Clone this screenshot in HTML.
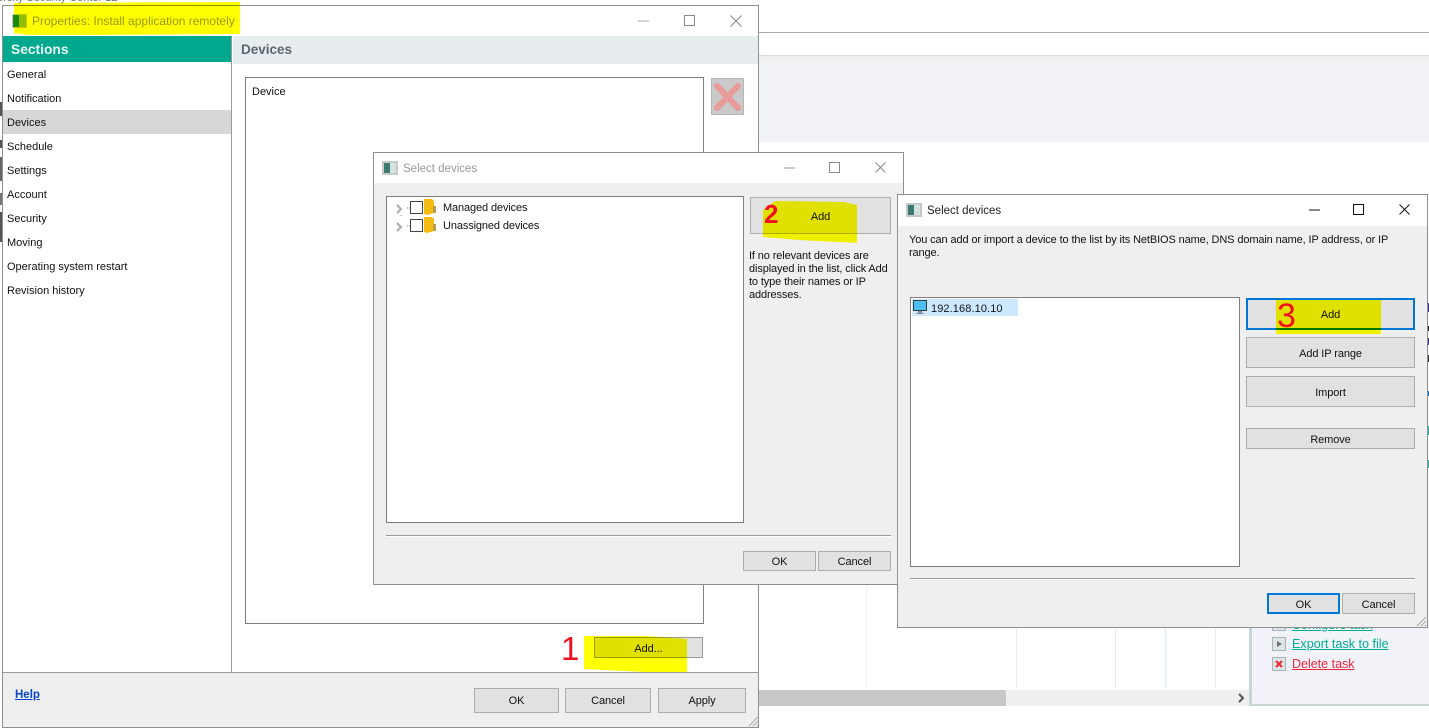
<!DOCTYPE html>
<html><head><meta charset="utf-8"><style>
*{box-sizing:border-box}
html,body{margin:0;padding:0;width:1429px;height:728px;overflow:hidden;background:#fff}
body{position:relative;font:11px/14px "Liberation Sans",sans-serif;color:#111}
div,svg,span.t{position:absolute}
.t{white-space:nowrap;line-height:14px}
.b{background:#e1e1e1;border:1px solid #adadad;text-align:center;color:#111;display:flex;align-items:center;justify-content:center;letter-spacing:-.1px}
.p{padding-top:2px}
.n{letter-spacing:-.12px}
.win{overflow:hidden;border:1px solid #8f8f8f;background:#efefef}
.hl{mix-blend-mode:multiply}
.l{background:#fff;border:1px solid #7d7d7d}
</style></head><body>
<!-- background app -->
<div style="left:0;top:-10px;width:200px;height:15px;overflow:hidden;left:0"><span class="t" style="left:-28px;top:1px;color:#777;font-size:11px">Kaspersky Security Center 12</span></div>
<div style="left:758px;top:32px;width:671px;height:1px;background:#a9a9a9"></div>
<div style="left:758px;top:55px;width:671px;height:1px;background:#ddd"></div>
<div style="left:758px;top:56px;width:671px;height:6px;background:#efefef"></div>
<div style="left:758px;top:62px;width:671px;height:80px;background:#f1f3f8"></div>
<div style="left:866px;top:585px;width:1px;height:104px;background:#edf2f8"></div>
<div style="left:1016px;top:628px;width:1px;height:61px;background:#e4edf6"></div>
<div style="left:1115px;top:628px;width:1px;height:61px;background:#e4edf6"></div>
<div style="left:1165px;top:628px;width:1px;height:61px;background:#e4edf6"></div>
<div style="left:1215px;top:628px;width:1px;height:61px;background:#e4edf6"></div>
<div style="left:758px;top:690px;width:491px;height:16px;background:#efefef"></div>
<div style="left:758px;top:690px;width:248px;height:16px;background:#c8c8c8"></div>
<svg style="left:1237px;top:692px" width="10" height="12"><path d="M2 2l4 4-4 4" fill="none" stroke="#555" stroke-width="2"/></svg>
<div style="left:1249px;top:620px;width:180px;height:86px;background:#f1f3f8;border-left:3px solid #c9d6d6;border-bottom:2px solid #c9d6d6"></div>
<span class="t" style="left:1292px;top:618px;font-size:12.500px;color:#00ad94;text-decoration:underline">Configure task</span>
<div style="left:1272px;top:618px;width:14px;height:13px;background:#dfe4e8;border:1px solid #a9b4b8"></div>
<div style="left:1272px;top:637px;width:14px;height:14px;background:#dfe4e8;border:1px solid #a9b4b8"></div>
<svg style="left:1272px;top:637px" width="14" height="14"><path d="M5 4l5 3-5 3z" fill="#6b7378"/></svg>
<span class="t" style="left:1292px;top:637px;font-size:12.600px;color:#00ad94;text-decoration:underline">Export task to file</span>
<div style="left:1272px;top:657px;width:14px;height:14px;background:#dfe4e8;border:1px solid #a9b4b8"></div>
<svg style="left:1272px;top:657px" width="14" height="14"><path d="M4 4l6 6M10 4l-6 6" stroke="#e8303c" stroke-width="2.2"/></svg>
<span class="t" style="left:1292px;top:657px;font-size:12.500px;color:#f0263c;text-decoration:underline">Delete task</span>
<!-- right edge bits -->
<div style="left:1428px;top:303px;width:1px;height:9px;background:#3b2f8f"></div>
<div style="left:1428px;top:326px;width:1px;height:5px;background:#222"></div>
<div style="left:1428px;top:338px;width:1px;height:7px;background:#3b2f8f"></div>
<div style="left:1428px;top:355px;width:1px;height:7px;background:#333"></div>
<div style="left:1428px;top:391px;width:1px;height:5px;background:#0078d7"></div>
<div style="left:1428px;top:426px;width:1px;height:9px;background:#1cb8a0"></div>
<div style="left:1428px;top:460px;width:1px;height:8px;background:#1cb8a0"></div>
<!-- left edge bits -->
<div style="left:0;top:102px;width:2px;height:14px;background:#555"></div>
<div style="left:0;top:140px;width:2px;height:8px;background:#555"></div>
<div style="left:0;top:157px;width:2px;height:24px;background:#666"></div>
<div style="left:0;top:193px;width:2px;height:12px;background:#777"></div>
<div style="left:0;top:212px;width:2px;height:30px;background:#555"></div>

<!-- window 1 -->
<div class="win" style="left:2px;top:5px;width:757px;height:723px;background:#fff">
  <div style="left:0;top:30px;width:228px;height:26px;background:#00a88e"></div>
  <span class="t" style="left:8px;top:37px;font-size:13.800px;font-weight:bold;color:#eaf7f4">Sections</span>
  <div style="left:230px;top:30px;width:526px;height:28px;background:#e7ecee"></div>
  <span class="t" style="left:238px;top:37px;font-size:13.500px;font-weight:bold;color:#5b6670">Devices</span>
  <div style="left:228px;top:30px;width:1px;height:636px;background:#9a9a9a"></div>
  <div style="left:0;top:104px;width:228px;height:24px;background:#d7d7d7"></div>
  <span class="t" style="left:4px;top:62px">General</span>
  <span class="t" style="left:4px;top:86px">Notification</span>
  <span class="t" style="left:4px;top:110px">Devices</span>
  <span class="t" style="left:4px;top:134px">Schedule</span>
  <span class="t" style="left:4px;top:158px">Settings</span>
  <span class="t" style="left:4px;top:182px">Account</span>
  <span class="t" style="left:4px;top:206px">Security</span>
  <span class="t" style="left:4px;top:230px">Moving</span>
  <span class="t" style="left:4px;top:254px">Operating system restart</span>
  <span class="t" style="left:4px;top:278px">Revision history</span>
  <div class="l" style="left:242px;top:71px;width:459px;height:547px"></div>
  <span class="t" style="left:249px;top:79px">Device</span>
  <div style="left:708px;top:72px;width:33px;height:37px;background:#c9c9c9;border:1px solid #b5b5b5"></div>
  <svg style="left:708px;top:72px" width="33" height="37"><path d="M6 8l21 22M27 8L6 30" stroke="#e99a9a" stroke-width="6" stroke-linecap="round"/></svg>
  <div class="b p" style="left:591px;top:631px;width:109px;height:21px;border-color:#999">Add...</div>
  <div style="left:0;top:666px;width:755px;height:1px;background:#9a9a9a"></div>
  <div style="left:0;top:667px;width:755px;height:54px;background:#efefef"></div>
  <span class="t" style="left:12px;top:682px;font-weight:bold;font-size:11.500px;color:#0645c8;text-decoration:underline">Help</span>
  <div class="b" style="left:471px;top:682px;width:85px;height:25px">OK</div>
  <div class="b" style="left:562px;top:682px;width:86px;height:25px">Cancel</div>
  <div class="b" style="left:655px;top:682px;width:88px;height:25px">Apply</div>
  <svg style="left:745px;top:709px" width="11" height="12"><path d="M1 11L10 2M5 11l5-5M9 11l1-1" stroke="#aaa"/></svg>
  <span class="t" style="left:29px;top:8px;font-size:12px;color:#999">Properties: Install application remotely</span>
  <svg style="left:9px;top:8px" width="15" height="14"><rect width="15" height="14" fill="#c9c9c9"/><rect x="1" y="1" width="6" height="12" fill="#1b8a1f"/><rect x="7" y="1" width="7" height="12" fill="#8fc03a"/></svg>
  <svg style="left:634px;top:8px" width="14" height="14"><path d="M1 7h11" stroke="#aaa"/></svg>
  <svg style="left:680px;top:8px" width="14" height="14"><rect x="1.500" y="1.500" width="10" height="10" fill="none" stroke="#888"/></svg>
  <svg style="left:726px;top:8px" width="14" height="14"><path d="M1.500 1.500l11 11M12.500 1.500l-11 11" stroke="#888" fill="none"/></svg>
</div>
<!-- highlight 1 & title -->
<svg class="hl" style="left:0;top:0;position:absolute" width="760" height="728">
  <path d="M14 3L240 2V34L88 35H28L14 33Z" fill="#ff0"/>
  <path d="M584 636L646 636L687 639V672L646 672L584 669Z" fill="#ff0"/>
</svg>
<svg style="left:560px;top:632px" width="30" height="34"><text x="1" y="28" font-family="Liberation Sans" font-size="33" fill="#f01020">1</text></svg>

<!-- window 2 -->
<div class="win" style="left:373px;top:152px;width:531px;height:433px">
  <div style="left:0;top:0;width:530px;height:30px;background:#fff"></div>
  <svg style="left:8px;top:8px" width="16" height="14"><rect width="16" height="14" fill="#c4c8c8"/><rect x="2" y="2" width="6" height="10" fill="#3c7a70"/><rect x="8" y="2" width="6" height="10" fill="#d4e2de"/></svg>
  <span class="t" style="left:29px;top:9px;font-size:11.500px;color:#999">Select devices</span>
  <svg style="left:409px;top:8px" width="14" height="14"><path d="M1 7h11" stroke="#999"/></svg>
  <svg style="left:454px;top:8px" width="14" height="14"><rect x="1.500" y="1.500" width="10" height="10" fill="none" stroke="#888"/></svg>
  <svg style="left:500px;top:8px" width="14" height="14"><path d="M1.500 1.500l10 10M11.500 1.500l-10 10" stroke="#888" fill="none"/></svg>
  <div class="l" style="left:12px;top:43px;width:358px;height:327px"></div>
  <svg style="left:19px;top:46px" width="70" height="36">
    <path d="M4 6l4 4-4 4M4 24l4 4-4 4" fill="none" stroke="#aaa" stroke-width="2"/>
    <path d="M14 9h3M14 27h3M8 16v2" stroke="#888" stroke-dasharray="1 1"/>
    <rect x="17.500" y="2.500" width="12" height="12" fill="#fff" stroke="#444"/>
    <rect x="17.500" y="20.500" width="12" height="12" fill="#fff" stroke="#444"/>
    <path d="M31 0h8l2 2v12l-7 2-3-1z" fill="#f2bd10"/><path d="M40 7h3v7h-3z" fill="#b89a50"/>
    <path d="M31 18h8l2 2v12l-7 2-3-1z" fill="#f2bd10"/><path d="M40 25h3v7h-3z" fill="#b89a50"/>
  </svg>
  <span class="t n" style="left:69px;top:48px">Managed devices</span>
  <span class="t n" style="left:69px;top:66px">Unassigned devices</span>
  <div class="b p" style="left:376px;top:44px;width:141px;height:37px">Add</div>
  <span class="t n" style="left:375px;top:96px">If no relevant devices are</span>
  <span class="t n" style="left:375px;top:109px">displayed in the list, click Add</span>
  <span class="t n" style="left:375px;top:122px">to type their names or IP</span>
  <span class="t n" style="left:375px;top:135px">addresses.</span>
  <div style="left:12px;top:382px;width:505px;height:1px;background:#9a9a9a"></div>
  <div style="left:12px;top:383px;width:505px;height:1px;background:#fff"></div>
  <div class="b p" style="left:369px;top:398px;width:73px;height:20px">OK</div>
  <div class="b p" style="left:444px;top:398px;width:73px;height:20px">Cancel</div>
  <svg class="hl" style="left:0;top:0" width="530" height="100"><path d="M401 48L470 49L483 52V90L425 87L389 84V57Z" fill="#ff0"/></svg>
  <svg style="left:388px;top:45px" width="30" height="30"><text x="2" y="25" font-family="Liberation Sans" font-size="26" font-weight="bold" fill="#f01020">2</text></svg>
</div>

<!-- window 3 -->
<div class="win" style="left:897px;top:194px;width:531px;height:434px">
  <div style="left:0;top:0;width:530px;height:31px;background:#fff"></div>
  <svg style="left:8px;top:8px" width="16" height="14"><rect width="16" height="14" fill="#c4c8c8"/><rect x="2" y="2" width="6" height="10" fill="#3c7a70"/><rect x="8" y="2" width="6" height="10" fill="#d4e2de"/></svg>
  <span class="t" style="left:29px;top:9px;font-size:11.500px;color:#222">Select devices</span>
  <svg style="left:410px;top:8px" width="14" height="14"><path d="M1 7h11" stroke="#111"/></svg>
  <svg style="left:454px;top:8px" width="14" height="14"><rect x="1.500" y="1.500" width="10" height="10" fill="none" stroke="#111"/></svg>
  <svg style="left:500px;top:8px" width="14" height="14"><path d="M1.500 1.500l10 10M11.500 1.500l-10 10" stroke="#111" fill="none"/></svg>
  <span class="t n" style="left:11px;top:38px">You can add or import a device to the list by its NetBIOS name, DNS domain name, IP address, or IP</span>
  <span class="t n" style="left:11px;top:51px">range.</span>
  <div class="l" style="left:12px;top:102px;width:330px;height:270px"></div>
  <div style="left:14px;top:104px;width:106px;height:17px;background:#cce8ff"></div>
  <svg style="left:15px;top:105px" width="15" height="15"><rect x=".5" y=".5" width="13" height="10" fill="#4cc0f5" stroke="#333a40"/><path d="M5 11h4v2H5zM3 13h8v1H3z" fill="#8a9298"/></svg>
  <span class="t" style="left:33px;top:107px;letter-spacing:.1px">192.168.10.10</span>
  <div class="b p" style="left:348px;top:103px;width:169px;height:32px;border:2px solid #0078d7">Add</div>
  <div class="b p" style="left:348px;top:142px;width:169px;height:31px">Add IP range</div>
  <div class="b p" style="left:348px;top:181px;width:169px;height:31px">Import</div>
  <div class="b p" style="left:348px;top:233px;width:169px;height:21px">Remove</div>
  <div style="left:12px;top:383px;width:505px;height:1px;background:#9a9a9a"></div>
  <div style="left:12px;top:384px;width:505px;height:1px;background:#fff"></div>
  <div class="b p" style="left:369px;top:398px;width:73px;height:21px;border:2px solid #0078d7">OK</div>
  <div class="b p" style="left:444px;top:398px;width:73px;height:21px">Cancel</div>
  <svg style="left:518px;top:420px" width="11" height="12"><path d="M1 11L10 2M5 11l5-5M9 11l1-1" stroke="#aaa"/></svg>
  <svg class="hl" style="left:0;top:0" width="530" height="150"><rect x="378" y="105" width="105" height="34" fill="#ff0"/></svg>
  <svg style="left:378px;top:102px" width="32" height="36"><text x="1" y="30" font-family="Liberation Sans" font-size="34" fill="#f01020">3</text></svg>
</div>
</body></html>
